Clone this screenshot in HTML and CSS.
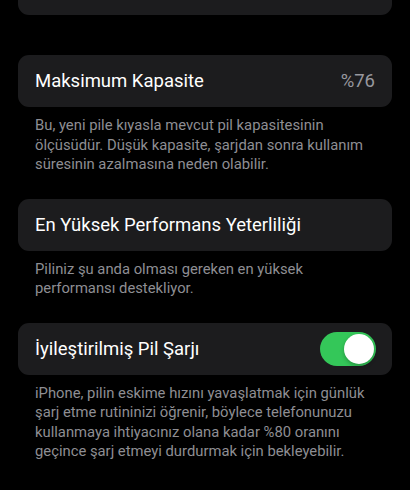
FILE: index.html
```html
<!DOCTYPE html>
<html lang="tr">
<head>
<meta charset="utf-8">
<link rel="stylesheet" href="styles.css">
</head>
<body>
<div class="page">
  <div class="card card-top"></div>

  <section class="group first">
    <div class="card row">
      <span class="label">Maksimum Kapasite</span>
      <span class="value">%76</span>
    </div>
    <p class="footer">Bu, yeni pile kıyasla mevcut pil kapasitesinin ölçüsüdür. Düşük kapasite, şarjdan sonra kullanım süresinin azalmasına neden olabilir.</p>
  </section>

  <section class="group">
    <div class="card row">
      <span class="label">En Yüksek Performans Yeterliliği</span>
    </div>
    <p class="footer">Piliniz şu anda olması gereken en yüksek performansı destekliyor.</p>
  </section>

  <section class="group">
    <div class="card row">
      <span class="label">İyileştirilmiş Pil Şarjı</span>
      <span class="toggle"><span class="knob"></span></span>
    </div>
    <p class="footer">iPhone, pilin eskime hızını yavaşlatmak için günlük şarj etme rutininizi öğrenir, böylece telefonunuzu kullanmaya ihtiyacınız olana kadar %80 oranını geçince şarj etmeyi durdurmak için bekleyebilir.</p>
  </section>
</div>
</body>
</html>
```

FILE: styles.css
```css
html, body {
  margin: 0;
  padding: 0;
  background: #000;
}
body {
  width: 410px;
  height: 490px;
  overflow: hidden;
  font-family: Roboto, "Noto Sans", "Liberation Sans", sans-serif;
  -webkit-font-smoothing: antialiased;
}
.page {
  padding: 0 18px;
}
.card {
  background: #1c1c1e;
  border-radius: 11px;
}
.card-top {
  height: 15px;
  border-radius: 0 0 11px 11px;
}
.group {
  margin-top: 24px;
}
.group.first {
  margin-top: 40px;
}
.row {
  height: 52px;
  display: flex;
  align-items: center;
  justify-content: space-between;
  padding: 0 17px;
  box-sizing: border-box;
}
.label {
  color: #fff;
  font-size: 18.5px;
}
.value {
  color: #98989e;
  font-size: 18.5px;
}
.footer {
  margin: 0;
  padding: 9px 17px 0;
  color: #8e8e93;
  font-size: 14.8px;
  line-height: 19.5px;
}
.toggle {
  width: 56px;
  height: 34px;
  border-radius: 17px;
  background: #34c759;
  display: flex;
  align-items: center;
  justify-content: flex-end;
  padding: 0 2px;
  box-sizing: border-box;
  margin-right: -1px;
}
.knob {
  width: 30px;
  height: 30px;
  border-radius: 50%;
  background: #fff;
  box-shadow: 0 2px 4px rgba(0,0,0,0.25);
}
```
